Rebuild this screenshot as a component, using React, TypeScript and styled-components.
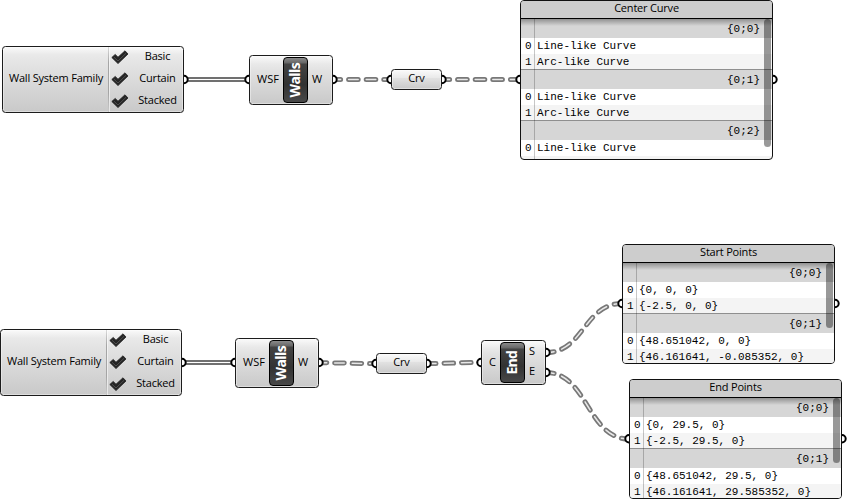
import React from "react";
import styled, { createGlobalStyle } from "styled-components";

const GlobalStyle = createGlobalStyle`
  body { margin: 0; background: #fff; overflow: hidden; }
  *, *::before, *::after { box-sizing: border-box; }
`;

const Canvas = styled.main`
  position: relative;
  width: 847px;
  height: 499px;
  overflow: hidden;
  background: #fff;
  color: #000;
  font: 11px/16px "Open Sans", "Noto Sans", sans-serif;
  letter-spacing: -0.2px;
  white-space: pre;
`;

const WireLayer = styled.svg`
  position: absolute;
  inset: 0;
`;

type Box = { $x: number; $y: number; $w: number; $h: number };

const Node = styled.section<Box>`
  position: absolute;
  left: ${(p) => p.$x}px;
  top: ${(p) => p.$y}px;
  width: ${(p) => p.$w}px;
  height: ${(p) => p.$h}px;
  display: flex;
  border: 1px solid #1c1c1c;
  border-radius: 3.5px;
  box-shadow: inset 0 0 0 1px rgba(255, 255, 255, 0.4);
  background: linear-gradient(#fafafa 0, #e9e9e9 8px, #e2e2e2 30%, #c9c9c9 100%);
`;

const ListTitle = styled.div`
  width: 105px;
  padding: 0 0 4px 6px;
  display: flex;
  align-items: center;
`;

const ListItems = styled.div`
  flex: 1;
  display: flex;
  flex-direction: column;
  border-left: 1px solid;
  border-image: linear-gradient(#ddd, #a5a5a5 25%, #a5a5a5 70%, #ccc) 1;
  box-shadow: inset 1px 0 rgba(255, 255, 255, 0.55);
`;

const ListItem = styled.div`
  height: 22px;
  flex-shrink: 0;
  display: grid;
  grid-template-columns: 24px 49px;
  align-items: center;
`;

const ItemLabel = styled.span`
  height: 20px;
  line-height: 15px;
  text-align: center;
`;

const Check = styled.svg`
  margin-left: 2px;
  margin-top: -1px;
`;

const Inputs = styled.div<{ $w: number }>`
  width: ${(p) => p.$w}px;
  padding: 0 0 2px 7px;
  display: flex;
  align-items: center;
  letter-spacing: 0;
`;

const Outputs = styled.div`
  flex: 1;
  padding-left: 4px;
  padding-bottom: 1px;
  display: flex;
  flex-direction: column;
  justify-content: space-evenly;
`;

const OutputLabel = styled.span`
  height: 20px;
  line-height: 18px;
`;

const Badge = styled.div`
  width: 25px;
  margin: 1px 0;
  padding-right: 1px;
  display: flex;
  align-items: center;
  justify-content: center;
  border: 1px solid #000;
  border-radius: 4px;
  background: linear-gradient(#8a8a8a 0, #666 5px, #434343 6px, #323232 60%, #484848 100%);
`;

const BadgeText = styled.span<{ $spacing: number }>`
  writing-mode: vertical-rl;
  transform: rotate(180deg);
  color: #fff;
  font-size: 14px;
  font-weight: 700;
  line-height: 20px;
  letter-spacing: ${(p) => p.$spacing}px;
`;

const ParamLabel = styled.span`
  width: 100%;
  text-align: center;
  line-height: 16px;
`;

const PanelBox = styled.section<Box>`
  position: absolute;
  left: ${(p) => p.$x}px;
  top: ${(p) => p.$y}px;
  width: ${(p) => p.$w}px;
  height: ${(p) => p.$h}px;
  overflow: hidden;
  border: 1px solid #111;
  border-radius: 4px;
  background: #f4f4f4;
`;

const PanelHeader = styled.header`
  height: 18px;
  border-bottom: 1px solid #000;
  background: #cdcdcd;
  text-align: center;
  line-height: 13px;
`;

const PanelBody = styled.div`
  position: relative;
  font-family: "Liberation Mono", monospace;
  font-size: 11px;
  letter-spacing: 0;
`;

const HeaderShade = styled.div`
  position: absolute;
  inset: 0 0 auto;
  height: 7px;
  background: linear-gradient(rgba(0, 0, 0, 0.32), rgba(0, 0, 0, 0));
`;

const Group = styled.div`
  & + & {
    border-top: 1px solid #8f8f8f;
  }
`;

const PathRow = styled.div`
  height: 19px;
  padding-right: 12px;
  background: #d6d6d6;
  text-align: right;
  line-height: 20px;
`;

const DataRow = styled.div<{ $odd: boolean }>`
  height: ${(p) => (p.$odd ? 15 : 16)}px;
  display: grid;
  grid-template-columns: 16px 1fr;
  background: ${(p) => (p.$odd ? "#f4f4f4" : "#fff")};
  line-height: 17px;
`;

const RowIndex = styled.span`
  padding-left: 4px;
`;

const IndexRule = styled.div`
  position: absolute;
  left: 13px;
  top: 0;
  width: 1px;
  height: 200px;
  background: rgba(0, 0, 0, 0.22);
`;

const ScrollThumb = styled.div<{ $h: number }>`
  position: absolute;
  right: 1px;
  top: 0;
  width: 7px;
  height: ${(p) => p.$h}px;
  border-radius: 3.5px;
  background: rgba(0, 0, 0, 0.4);
`;

const ITEMS = ["Basic", "Curtain", "Stacked"];

function ValueList({ x, y }: { x: number; y: number }) {
  return (
    <Node $x={x} $y={y} $w={182} $h={67}>
      <ListTitle>Wall System Family</ListTitle>
      <ListItems>
        {ITEMS.map((item) => (
          <ListItem key={item}>
            <Check width="18" height="15" viewBox="0 0 18 15">
              <path d="M.8 7.5 4.2 4.4 7 7.2 14 .8 17 4 7 13.6Z" fill="#242424" stroke="#242424" strokeWidth=".8" strokeLinejoin="round" />
              <path d="M3 7.2 7 11 15 3.3" fill="none" stroke="#505050" strokeWidth="1" />
            </Check>
            <ItemLabel>{item}</ItemLabel>
          </ListItem>
        ))}
      </ListItems>
    </Node>
  );
}

type ComponentProps = {
  x: number; y: number; w: number; h: number; input: string; inputWidth: number;
  name: string; spacing: number; outputs: string[];
};

function ComponentNode({ x, y, w, h, input, inputWidth, name, spacing, outputs }: ComponentProps) {
  return (
    <Node $x={x} $y={y} $w={w} $h={h}>
      <Inputs $w={inputWidth}>{input}</Inputs>
      <Badge><BadgeText $spacing={spacing}>{name}</BadgeText></Badge>
      <Outputs>
        {outputs.map((o) => <OutputLabel key={o}>{o}</OutputLabel>)}
      </Outputs>
    </Node>
  );
}

function Param({ x, y }: { x: number; y: number }) {
  return (
    <Node $x={x} $y={y} $w={51} $h={21}>
      <ParamLabel>Crv</ParamLabel>
    </Node>
  );
}

type PanelProps = { x: number; y: number; w: number; h: number; title: string; thumb: number; groups: string[][] };

function Panel({ x, y, w, h, title, thumb, groups }: PanelProps) {
  return (
    <PanelBox $x={x} $y={y} $w={w} $h={h}>
      <PanelHeader>{title}</PanelHeader>
      <PanelBody>
        {groups.map((rows, g) => (
          <Group key={g}>
            <PathRow>{`{0;${g}}`}</PathRow>
            {rows.map((row, i) => (
              <DataRow key={i} $odd={i % 2 === 1}>
                <RowIndex>{i}</RowIndex>
                <span>{row}</span>
              </DataRow>
            ))}
          </Group>
        ))}
        <IndexRule />
        <HeaderShade />
        <ScrollThumb $h={thumb} />
      </PanelBody>
    </PanelBox>
  );
}

const SOLID_WIRES = ["M184 79.5H249", "M182 362.5H235"];

const TREE_WIRES = [
  { d: "M333 79.5H391", offset: 2 },
  { d: "M442 79.5H520", offset: 2 },
  { d: "M319 362.8C347 362.8 348 363.5 376 363.5", offset: 2 },
  { d: "M427 363.5C454 363.5 454 362.5 481 362.5", offset: 0.6 },
  { d: "M546 352.5C584 352.5 584 303.5 622 303.5", offset: 1.5 },
  { d: "M546 372.5C587.5 372.5 587.5 439 629 439", offset: 1.5 },
];

const PORTS = [
  [184, 79.5], [249, 79.5], [333, 79.5], [391, 79.5], [442, 79.5], [520, 79.5], [773, 79.5],
  [182, 362.5], [235, 362.5], [319, 362.5], [376, 363.5], [427, 363.5], [481, 362.5],
  [546, 352.5], [546, 372.5], [622, 303.5], [835, 303.5], [629, 438.7], [842, 438.7],
];

const CURVES = ["Line-like Curve", "Arc-like Curve"];

export default function App() {
  return (
    <>
      <GlobalStyle />
      <Canvas>
        <WireLayer width="847" height="499" fill="none">
          {SOLID_WIRES.map((d) => (
            <g key={d}>
              <path d={d} stroke="#707070" strokeWidth="5" />
              <path d={d} stroke="#fff" strokeWidth="1" />
            </g>
          ))}
          {TREE_WIRES.map(({ d, offset }) => (
            <g key={d} strokeLinecap="round" strokeDasharray="9.6 8" strokeDashoffset={offset}>
              <path d={d} stroke="#787878" strokeWidth="5" />
              <path d={d} stroke="#e8e8e8" strokeWidth="1.5" />
            </g>
          ))}
          {PORTS.map(([cx, cy]) => (
            <circle key={`${cx}-${cy}`} cx={cx} cy={cy} r="3.7" fill="#fff" stroke="#000" strokeWidth="2" />
          ))}
        </WireLayer>

        <ValueList x={2} y={46} />
        <ComponentNode x={249} y={55} w={84} h={50} input="WSF" inputWidth={33} name="Walls" spacing={-0.6} outputs={["W"]} />
        <Param x={391} y={69} />
        <Panel x={520} y={0} w={253} h={160} title="Center Curve" thumb={128} groups={[CURVES, CURVES, CURVES.slice(0, 1)]} />

        <ValueList x={0} y={329} />
        <ComponentNode x={235} y={338} w={84} h={50} input="WSF" inputWidth={33} name="Walls" spacing={-0.6} outputs={["W"]} />
        <Param x={376} y={353} />
        <ComponentNode x={481} y={340} w={65} h={45} input="C" inputWidth={18} name="End" spacing={-0.8} outputs={["S", "E"]} />
        <Panel
          x={622} y={244} w={213} h={120} title="Start Points" thumb={65}
          groups={[["{0, 0, 0}", "{-2.5, 0, 0}"], ["{48.651042, 0, 0}", "{46.161641, -0.085352, 0}"]]}
        />
        <Panel
          x={629} y={379} w={213} h={120} title="End Points" thumb={65}
          groups={[["{0, 29.5, 0}", "{-2.5, 29.5, 0}"], ["{48.651042, 29.5, 0}", "{46.161641, 29.585352, 0}"]]}
        />
      </Canvas>
    </>
  );
}
